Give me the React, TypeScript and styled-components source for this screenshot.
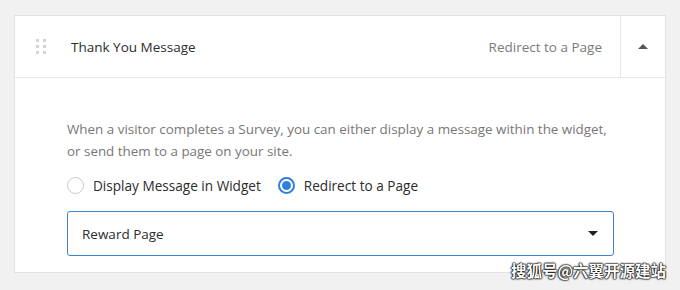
import React from "react";
import styled, { createGlobalStyle } from "styled-components";

const Global = createGlobalStyle`
  html, body { margin: 0; padding: 0; background: #f1f1f1; }
  body { font-family: "Open Sans", "Noto Sans", sans-serif; }
`;

const Page = styled.div`
  width: 680px;
  height: 290px;
  box-sizing: border-box;
  padding: 15px 14px 0 14px;
  background: #f1f1f1;
  position: relative;
`;

const Card = styled.div`
  background: #fff;
  border: 1px solid #e2e2e2;
  box-sizing: border-box;
  width: 652px;
`;

const Header = styled.div`
  display: flex;
  align-items: stretch;
  height: 61px;
  border-bottom: 1px solid #e6e6e6;
`;

const Handle = styled.div`
  width: 56px;
  display: flex;
  align-items: center;
  justify-content: flex-start;
  padding-left: 21px;
  box-sizing: border-box;
`;

const Dots = styled.div`
  display: grid;
  grid-template-columns: repeat(2, 3px);
  grid-auto-rows: 3px;
  column-gap: 4px;
  row-gap: 3px;
  span {
    width: 3px;
    height: 3px;
    background: #d4d4d4;
  }
`;

const Title = styled.div`
  flex: 1;
  display: flex;
  align-items: center;
  font-size: 13.5px;
  color: #2c2c2c;
`;

const Summary = styled.div`
  display: flex;
  align-items: center;
  padding-right: 18px;
  font-size: 13.5px;
  color: #7a7a7a;
`;

const Toggle = styled.div`
  width: 44px;
  border-left: 1px solid #e6e6e6;
  display: flex;
  align-items: center;
  justify-content: center;
`;

const Caret = styled.span<{ $up?: boolean }>`
  width: 0;
  height: 0;
  border-left: 5px solid transparent;
  border-right: 5px solid transparent;
  ${(p) =>
    p.$up
      ? "border-bottom: 5px solid #555;"
      : "border-top: 5px solid #222;"}
`;

const Body = styled.div`
  padding: 40px 52px 16px 52px;
`;

const Description = styled.p`
  margin: 0;
  font-size: 13.4px;
  line-height: 22px;
  color: #777;
`;

const RadioRow = styled.div`
  display: flex;
  align-items: center;
  gap: 17px;
  margin-top: 12px;
  height: 22px;
`;

const RadioOption = styled.label`
  display: flex;
  align-items: center;
  gap: 9px;
  font-size: 13.6px;
  color: #2c2c2c;
`;

const RadioCircle = styled.span<{ $checked?: boolean }>`
  width: 17px;
  height: 17px;
  box-sizing: border-box;
  border-radius: 50%;
  border: ${(p) => (p.$checked ? "2px solid #2f7fdc" : "1px solid #c9c9c9")};
  display: flex;
  align-items: center;
  justify-content: center;
  &::after {
    content: "";
    display: ${(p) => (p.$checked ? "block" : "none")};
    width: 9px;
    height: 9px;
    border-radius: 50%;
    background: #2f7fdc;
  }
`;

const Select = styled.div`
  margin-top: 15px;
  height: 45px;
  box-sizing: border-box;
  width: 547px;
  border: 1px solid #3f84d4;
  border-radius: 3px;
  display: flex;
  align-items: center;
  justify-content: space-between;
  padding: 0 15px 0 14px;
  font-size: 13.5px;
  color: #2c2c2c;
`;

const Watermark = styled.div`
  position: absolute;
  right: 14px;
  bottom: 9px;
  font-family: "Noto Sans CJK SC", sans-serif;
  font-size: 15.5px;
  font-weight: 700;
  color: #fff;
  text-shadow: 0 0 1px #000, 0 0 1px #000, 0 0 2px #000, 0 0 2px #000;
`;

export default function App() {
  return (
    <>
      <Global />
      <Page>
        <Card>
          <Header>
            <Handle>
              <Dots>
                <span />
                <span />
                <span />
                <span />
                <span />
                <span />
              </Dots>
            </Handle>
            <Title>Thank You Message</Title>
            <Summary>Redirect to a Page</Summary>
            <Toggle>
              <Caret $up />
            </Toggle>
          </Header>
          <Body>
            <Description>
              When a visitor completes a Survey, you can either display a message within the widget,
              <br />
              or send them to a page on your site.
            </Description>
            <RadioRow>
              <RadioOption>
                <RadioCircle />
                Display Message in Widget
              </RadioOption>
              <RadioOption>
                <RadioCircle $checked />
                Redirect to a Page
              </RadioOption>
            </RadioRow>
            <Select>
              <span>Reward Page</span>
              <Caret />
            </Select>
          </Body>
        </Card>
        <Watermark>搜狐号@六翼开源建站</Watermark>
      </Page>
    </>
  );
}
